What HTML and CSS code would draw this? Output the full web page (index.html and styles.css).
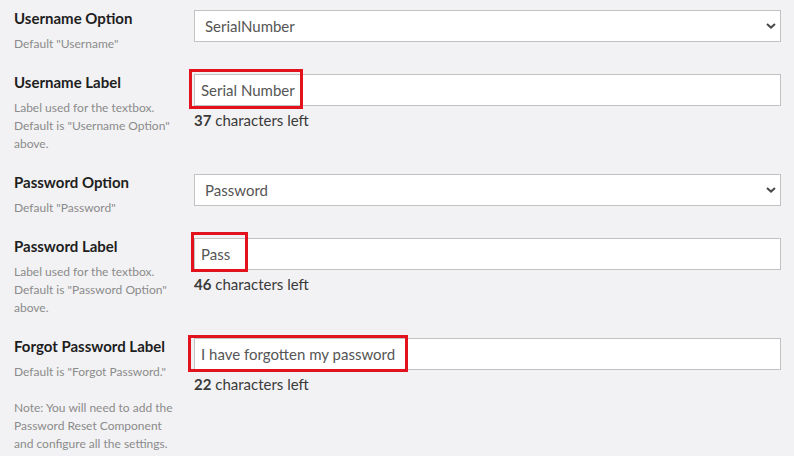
FILE: index.html
```html
<!DOCTYPE html>
<html>
<head>
<meta charset="utf-8">
<link rel="stylesheet" href="styles.css">
</head>
<body>
<div class="form">
  <div class="row">
    <div class="info">
      <div class="title">Username Option</div>
      <div class="desc">Default "Username"</div>
    </div>
    <div class="field">
      <div class="select"><span>SerialNumber</span><svg class="caret" width="10" height="6" viewBox="0 0 10 6"><path d="M1 1 L5 4.6 L9 1" fill="none" stroke="#4a4a4a" stroke-width="2"/></svg></div>
    </div>
  </div>
  <div class="row">
    <div class="info">
      <div class="title">Username Label</div>
      <div class="desc">Label used for the textbox.<br>Default is "Username Option"<br>above.</div>
    </div>
    <div class="field">
      <div class="input-wrap">
        <div class="input">Serial Number</div>
        <span class="mark mark-1"></span>
      </div>
      <div class="count"><b>37</b> characters left</div>
    </div>
  </div>
  <div class="row">
    <div class="info">
      <div class="title">Password Option</div>
      <div class="desc">Default "Password"</div>
    </div>
    <div class="field">
      <div class="select"><span>Password</span><svg class="caret" width="10" height="6" viewBox="0 0 10 6"><path d="M1 1 L5 4.6 L9 1" fill="none" stroke="#4a4a4a" stroke-width="2"/></svg></div>
    </div>
  </div>
  <div class="row">
    <div class="info">
      <div class="title">Password Label</div>
      <div class="desc">Label used for the textbox.<br>Default is "Password Option"<br>above.</div>
    </div>
    <div class="field">
      <div class="input-wrap">
        <div class="input">Pass</div>
        <span class="mark mark-2"></span>
      </div>
      <div class="count"><b>46</b> characters left</div>
    </div>
  </div>
  <div class="row">
    <div class="info">
      <div class="title">Forgot Password Label</div>
      <div class="desc">Default is "Forgot Password."</div>
      <div class="desc note">Note: You will need to add the<br>Password Reset Component<br>and configure all the settings.</div>
    </div>
    <div class="field">
      <div class="input-wrap">
        <div class="input">I have forgotten my password</div>
        <span class="mark mark-3"></span>
      </div>
      <div class="count"><b>22</b> characters left</div>
    </div>
  </div>
</div>
</body>
</html>
```
FILE: styles.css
```css
html, body {
  margin: 0;
  padding: 0;
  background: #f2f2f4;
}
body {
  font-family: Lato, "Open Sans", sans-serif;
  color: #222;
}
.form {
  padding: 10px 13px 0 14px;
}
.row {
  display: grid;
  grid-template-columns: 180px 1fr;
  margin-bottom: 21px;
}
.title {
  font-size: 15px;
  font-weight: 700;
  line-height: 16px;
  color: #1e1e1e;
}
.desc {
  margin-top: 9px;
  font-size: 12px;
  line-height: 18px;
  color: #8b8b8b;
}
.desc.note {
  margin-top: 18px;
}
.select, .input {
  box-sizing: border-box;
  height: 32px;
  background: #fff;
  border: 1px solid #c2c2c2;
  font-size: 15px;
  color: #555;
  display: flex;
  align-items: center;
}
.select {
  justify-content: space-between;
  padding: 0 4px 0 10px;
}
.caret {
  display: block;
}
.input {
  padding: 0 6px;
}
.input-wrap {
  position: relative;
}
.count {
  margin-top: 4px;
  font-size: 15px;
  line-height: 20px;
  color: #3a3a3a;
}
.count b {
  font-weight: 700;
}
.mark {
  position: absolute;
  box-sizing: border-box;
  border: 3px solid #e3131d;
}
.mark-1 {
  left: -5px;
  top: -5px;
  width: 114px;
  height: 40px;
}
.mark-2 {
  left: -3px;
  top: -6px;
  width: 57px;
  height: 40px;
}
.mark-3 {
  left: -6px;
  top: -3px;
  width: 220px;
  height: 37px;
}
```
